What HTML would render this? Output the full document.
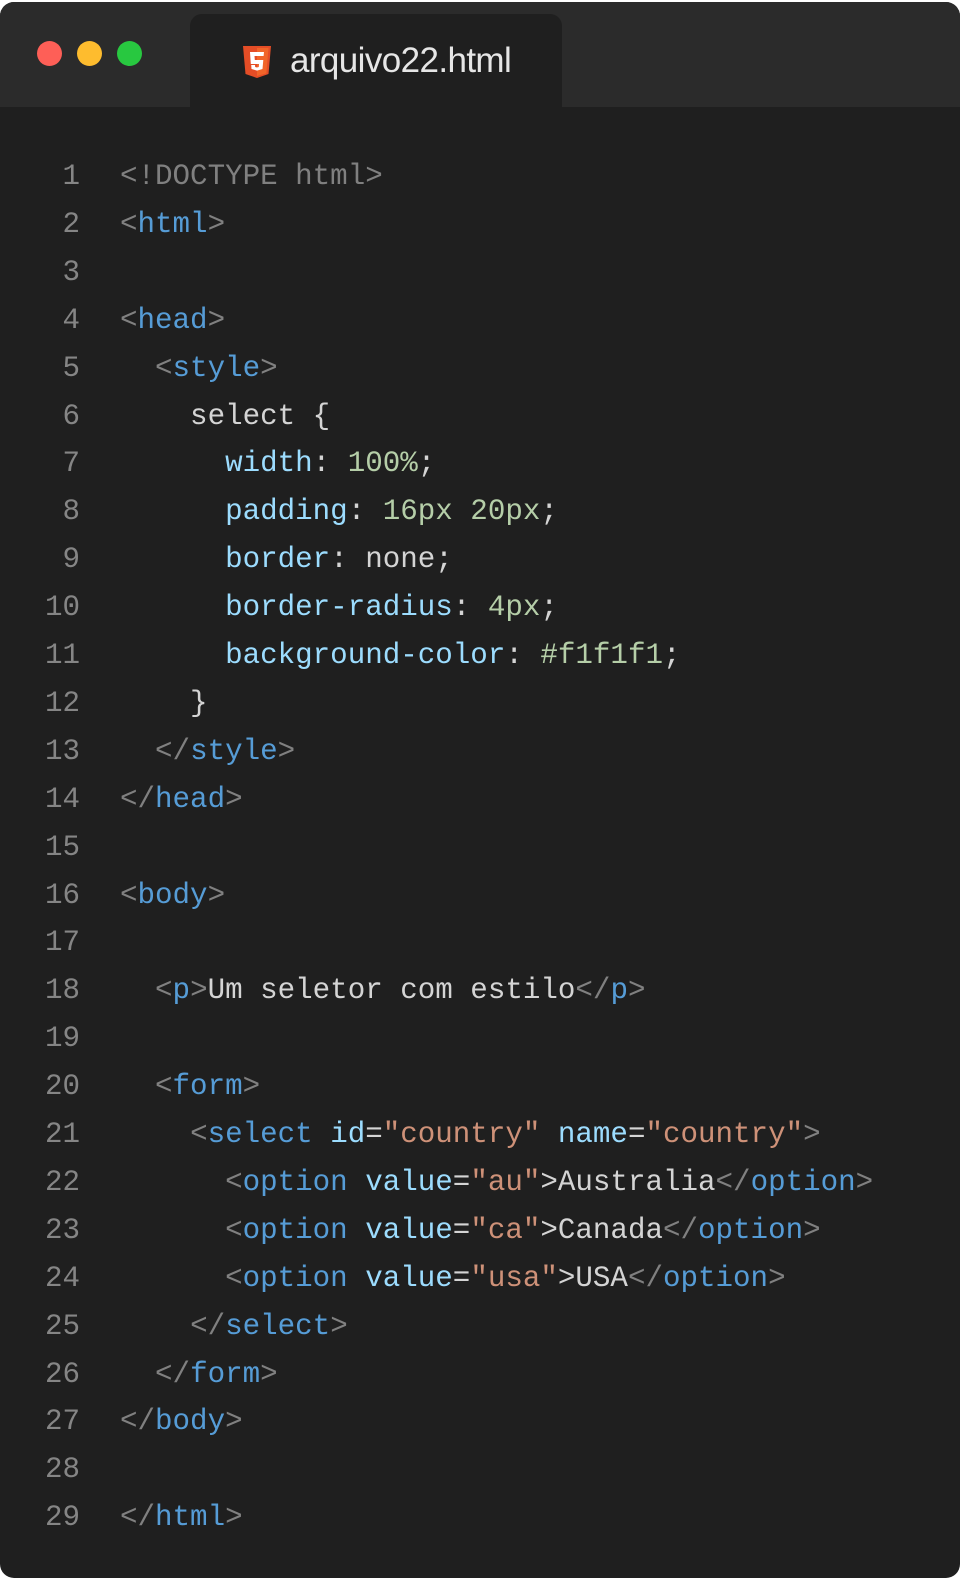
<!DOCTYPE html>
<html><head><style>
body{margin:0;background:#fff;width:960px;height:1578px;overflow:hidden}
.win{position:absolute;left:0;top:2px;width:960px;height:1576px;background:#1f1f1f;border-radius:14px;overflow:hidden}
.bar{position:absolute;left:0;top:0;width:960px;height:105px;background:#2b2b2b}
.dot{position:absolute;top:39px;width:25px;height:25px;border-radius:50%}
.tab{position:absolute;left:190px;top:12px;width:372px;height:93px;background:#1f1f1f;border-radius:12px 12px 0 0}
.tab span{position:absolute;left:100px;top:27px;font:35px "Liberation Sans",sans-serif;color:#e6e6e6;letter-spacing:-0.6px}
.code{position:absolute;left:0;top:0;font:29.2px/44px "Liberation Mono",monospace;color:#d4d4d4;white-space:pre}
.l{position:absolute;left:0;height:44px}
.ln{position:absolute;left:0;width:80px;text-align:right;color:#858585}
.tx{position:absolute;left:120px}
.g{color:#808080}.t{color:#569cd6}.a{color:#9cdcfe}.s{color:#ce9178}.n{color:#b5cea8}
</style></head><body><div class="win">
<div class="bar"></div>
<div class="dot" style="left:37px;background:#fe5f57"></div>
<div class="dot" style="left:77px;background:#febc2e"></div>
<div class="dot" style="left:117px;background:#28c840"></div>
<div class="tab">
<svg style="position:absolute;left:53px;top:32px" width="28" height="32" viewBox="0 0 28 32"><path d="M0 0h28l-2.5 28L14 32 2.5 28z" fill="#e44d26"/><path d="M14 2v28l9.3-2.6L25.5 2z" fill="#f16529"/><path d="M7 6h14l-.4 4H11.5l.3 4h8.5l-.8 9L14 24.6 8.5 23l-.3-4h3.8l.2 2 1.8.5 1.8-.5.2-3H7.8z" fill="#fff"/></svg>
<span>arquivo22.html</span></div>
<div class="code">
<div class="l" style="top:153px"><span class="ln">1</span><span class="tx"><span class="g">&lt;!DOCTYPE html&gt;</span></span></div>
<div class="l" style="top:201px"><span class="ln">2</span><span class="tx"><span class="g">&lt;</span><span class="t">html</span><span class="g">&gt;</span></span></div>
<div class="l" style="top:249px"><span class="ln">3</span></div>
<div class="l" style="top:297px"><span class="ln">4</span><span class="tx"><span class="g">&lt;</span><span class="t">head</span><span class="g">&gt;</span></span></div>
<div class="l" style="top:345px"><span class="ln">5</span><span class="tx">  <span class="g">&lt;</span><span class="t">style</span><span class="g">&gt;</span></span></div>
<div class="l" style="top:393px"><span class="ln">6</span><span class="tx">    select {</span></div>
<div class="l" style="top:440px"><span class="ln">7</span><span class="tx">      <span class="a">width</span>: <span class="n">100%</span>;</span></div>
<div class="l" style="top:488px"><span class="ln">8</span><span class="tx">      <span class="a">padding</span>: <span class="n">16px 20px</span>;</span></div>
<div class="l" style="top:536px"><span class="ln">9</span><span class="tx">      <span class="a">border</span>: none;</span></div>
<div class="l" style="top:584px"><span class="ln">10</span><span class="tx">      <span class="a">border-radius</span>: <span class="n">4px</span>;</span></div>
<div class="l" style="top:632px"><span class="ln">11</span><span class="tx">      <span class="a">background-color</span>: <span class="n">#f1f1f1</span>;</span></div>
<div class="l" style="top:680px"><span class="ln">12</span><span class="tx">    }</span></div>
<div class="l" style="top:728px"><span class="ln">13</span><span class="tx">  <span class="g">&lt;/</span><span class="t">style</span><span class="g">&gt;</span></span></div>
<div class="l" style="top:776px"><span class="ln">14</span><span class="tx"><span class="g">&lt;/</span><span class="t">head</span><span class="g">&gt;</span></span></div>
<div class="l" style="top:824px"><span class="ln">15</span></div>
<div class="l" style="top:872px"><span class="ln">16</span><span class="tx"><span class="g">&lt;</span><span class="t">body</span><span class="g">&gt;</span></span></div>
<div class="l" style="top:919px"><span class="ln">17</span></div>
<div class="l" style="top:967px"><span class="ln">18</span><span class="tx">  <span class="g">&lt;</span><span class="t">p</span><span class="g">&gt;</span>Um seletor com estilo<span class="g">&lt;/</span><span class="t">p</span><span class="g">&gt;</span></span></div>
<div class="l" style="top:1015px"><span class="ln">19</span></div>
<div class="l" style="top:1063px"><span class="ln">20</span><span class="tx">  <span class="g">&lt;</span><span class="t">form</span><span class="g">&gt;</span></span></div>
<div class="l" style="top:1111px"><span class="ln">21</span><span class="tx">    <span class="g">&lt;</span><span class="t">select</span> <span class="a">id</span>=<span class="s">"country"</span> <span class="a">name</span>=<span class="s">"country"</span><span class="g">&gt;</span></span></div>
<div class="l" style="top:1159px"><span class="ln">22</span><span class="tx">      <span class="g">&lt;</span><span class="t">option</span> <span class="a">value</span>=<span class="s">"au"</span>&gt;Australia<span class="g">&lt;/</span><span class="t">option</span><span class="g">&gt;</span></span></div>
<div class="l" style="top:1207px"><span class="ln">23</span><span class="tx">      <span class="g">&lt;</span><span class="t">option</span> <span class="a">value</span>=<span class="s">"ca"</span>&gt;Canada<span class="g">&lt;/</span><span class="t">option</span><span class="g">&gt;</span></span></div>
<div class="l" style="top:1255px"><span class="ln">24</span><span class="tx">      <span class="g">&lt;</span><span class="t">option</span> <span class="a">value</span>=<span class="s">"usa"</span>&gt;USA<span class="g">&lt;/</span><span class="t">option</span><span class="g">&gt;</span></span></div>
<div class="l" style="top:1303px"><span class="ln">25</span><span class="tx">    <span class="g">&lt;/</span><span class="t">select</span><span class="g">&gt;</span></span></div>
<div class="l" style="top:1351px"><span class="ln">26</span><span class="tx">  <span class="g">&lt;/</span><span class="t">form</span><span class="g">&gt;</span></span></div>
<div class="l" style="top:1398px"><span class="ln">27</span><span class="tx"><span class="g">&lt;/</span><span class="t">body</span><span class="g">&gt;</span></span></div>
<div class="l" style="top:1446px"><span class="ln">28</span></div>
<div class="l" style="top:1494px"><span class="ln">29</span><span class="tx"><span class="g">&lt;/</span><span class="t">html</span><span class="g">&gt;</span></span></div>
</div>
</div></body></html>
